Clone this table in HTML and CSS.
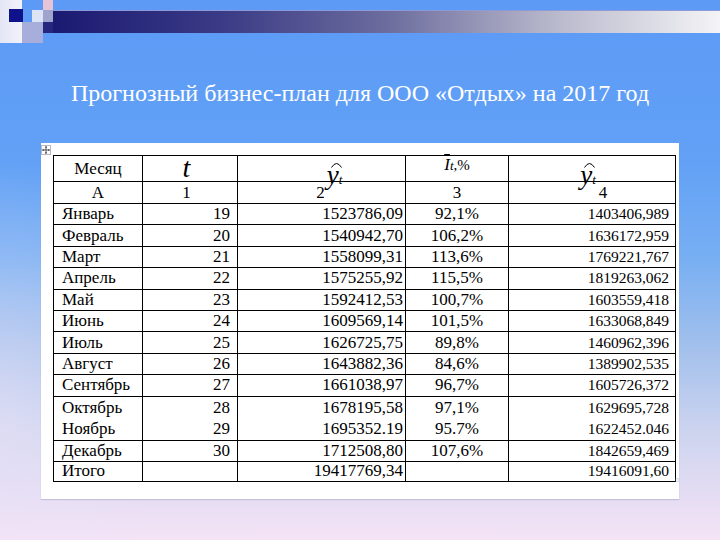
FILE: index.html
```html
<!DOCTYPE html>
<html lang="ru">
<head>
<meta charset="utf-8">
<title>Прогнозный бизнес-план</title>
<link rel="stylesheet" href="styles.css">
</head>
<body>
<div class="slide">
  <div class="decor">
    <span class="sq sq-a"></span>
    <span class="sq sq-b"></span>
    <span class="sq sq-c"></span>
    <span class="sq sq-d"></span>
    <span class="sq sq-e"></span>
    <span class="sq sq-f"></span>
    <span class="sq sq-g"></span>
    <span class="bar"></span>
  </div>
  <h1 class="title">Прогнозный бизнес-план для ООО «Отдых» на 2017 год</h1>
  <div class="panel">
    <svg class="handle" viewBox="0 0 10 10" width="10" height="10">
      <rect x="0.5" y="0.5" width="9" height="9" fill="#fff" stroke="#b8b8c8"/>
      <path d="M5 1.5V8.5M1.5 5H8.5" stroke="#333" stroke-width="0.8"/>
      <path d="M5 1 L3.8 2.6 H6.2Z M5 9 L3.8 7.4 H6.2Z M1 5 L2.6 3.8 V6.2Z M9 5 L7.4 3.8 V6.2Z" fill="#333"/>
    </svg>
    <table class="grid">
      <colgroup>
        <col class="c1"><col class="c2"><col class="c3"><col class="c4"><col class="c5">
      </colgroup>
      <tr class="r-head">
        <td class="ctr">Месяц</td>
        <td class="ctr"><i class="tvar">t</i></td>
        <td class="ctr top"><span class="yhat shift3"><i class="yv">y</i><svg class="hat" viewBox="0 0 12 7"><path d="M1 6.5 Q6 -1.5 11 6.5" fill="none" stroke="#000" stroke-width="1"/></svg><i class="sub">t</i></span></td>
        <td class="ctr top"><span class="ibar"><i class="iv">I</i><i class="sub">t</i>,%</span></td>
        <td class="ctr top"><span class="yhat shift5"><i class="yv">y</i><svg class="hat" viewBox="0 0 12 7"><path d="M1 6.5 Q6 -1.5 11 6.5" fill="none" stroke="#000" stroke-width="1"/></svg><i class="sub">t</i></span></td>
      </tr>
      <tr class="r-num">
        <td class="ctr">А</td>
        <td class="ctr">1</td>
        <td class="ctr">2</td>
        <td class="ctr">3</td>
        <td class="ctr four">4</td>
      </tr>
      <tr><td>Январь</td><td class="rt">19</td><td class="rt">1523786,09</td><td class="ctr">92,1%</td><td class="rt n5">1403406,989</td></tr>
      <tr><td>Февраль</td><td class="rt">20</td><td class="rt">1540942,70</td><td class="ctr">106,2%</td><td class="rt n5">1636172,959</td></tr>
      <tr><td>Март</td><td class="rt">21</td><td class="rt">1558099,31</td><td class="ctr">113,6%</td><td class="rt n5">1769221,767</td></tr>
      <tr><td>Апрель</td><td class="rt">22</td><td class="rt">1575255,92</td><td class="ctr">115,5%</td><td class="rt n5">1819263,062</td></tr>
      <tr><td>Май</td><td class="rt">23</td><td class="rt">1592412,53</td><td class="ctr">100,7%</td><td class="rt n5">1603559,418</td></tr>
      <tr><td>Июнь</td><td class="rt">24</td><td class="rt">1609569,14</td><td class="ctr">101,5%</td><td class="rt n5">1633068,849</td></tr>
      <tr><td>Июль</td><td class="rt">25</td><td class="rt">1626725,75</td><td class="ctr">89,8%</td><td class="rt n5">1460962,396</td></tr>
      <tr><td>Август</td><td class="rt">26</td><td class="rt">1643882,36</td><td class="ctr">84,6%</td><td class="rt n5">1389902,535</td></tr>
      <tr><td>Сентябрь</td><td class="rt">27</td><td class="rt">1661038,97</td><td class="ctr">96,7%</td><td class="rt n5">1605726,372</td></tr>
      <tr class="r-double"><td>Октябрь<br>Ноябрь</td><td class="rt">28<br>29</td><td class="rt">1678195,58<br>1695352.19</td><td class="ctr">97,1%<br>95.7%</td><td class="rt n5">1629695,728<br>1622452.046</td></tr>
      <tr><td>Декабрь</td><td class="rt">30</td><td class="rt">1712508,80</td><td class="ctr">107,6%</td><td class="rt n5">1842659,469</td></tr>
      <tr class="r-total"><td>Итого</td><td></td><td class="rt">19417769,34</td><td></td><td class="rt n5">19416091,60</td></tr>
    </table>
    <span class="cellmark">¤</span>
  </div>
</div>
</body>
</html>
```

FILE: styles.css
```css
html, body {
  margin: 0;
  padding: 0;
}
body {
  width: 720px;
  height: 540px;
  overflow: hidden;
  font-family: "Liberation Serif", Tinos, "DejaVu Serif", serif;
}
.slide {
  width: 720px;
  height: 540px;
  display: flex;
  flex-direction: column;
  background:
    radial-gradient(ellipse 160px 260px at 0% 78%, rgba(236, 228, 248, 0.55), rgba(236, 228, 248, 0) 100%),
    linear-gradient(to bottom, #5c9af6 0%, #62a1f6 30%, #78aff3 48%, #a2c0ec 64%, #cdd4ef 80%, #f5e3f6 100%);
}
.decor {
  position: relative;
  height: 43px;
  flex: none;
}
.sq {
  position: absolute;
  display: block;
}
.sq-a { left: 0; top: 0; width: 22px; height: 43px; background: linear-gradient(to right, #e4e6f6, #f2f2fb); }
.sq-b { left: 9px; top: 9px; width: 14px; height: 13px; background: #10128c; }
.sq-c { left: 32px; top: 10px; width: 11px; height: 12px; background: #dce4f5; }
.sq-d { left: 43px; top: 0; width: 10px; height: 10px; background: #e6c4d6; }
.sq-e { left: 43px; top: 10px; width: 10px; height: 12px; background: #9ea4cc; }
.sq-f { left: 22px; top: 22px; width: 21px; height: 21px; background: #a7aedc; }
.sq-g { left: 43px; top: 22px; width: 10px; height: 11px; background: #26267e; }
.bar {
  position: absolute;
  left: 53px;
  top: 10px;
  width: 667px;
  height: 23px;
  background: linear-gradient(to right, #1b1a72 0%, #3a3a86 25%, #6c6c9e 50%, #b8b8cc 75%, #f4f4f6 100%);
  border-top: 1px solid #8e9ad8;
  box-sizing: border-box;
}
.title {
  margin: 36px 0 0 0;
  height: 28px;
  line-height: 28px;
  font-family: "Liberation Serif", Tinos, "DejaVu Serif", serif;
  font-size: 24px;
  font-weight: normal;
  color: #ffffff;
  text-align: center;
  white-space: nowrap;
}
.panel {
  position: relative;
  margin: 36px 0 0 41px;
  width: 638px;
  box-sizing: border-box;
  padding: 12px 4px 17px 12px;
  background: #ffffff;
  box-shadow: 0 1px 1px rgba(120, 120, 160, 0.3);
}
.handle {
  position: absolute;
  left: 0;
  top: 2px;
}
.cellmark {
  position: absolute;
  right: 0;
  top: 334px;
  font-size: 8px;
  color: #aaa;
  line-height: 8px;
}
.grid {
  border-collapse: collapse;
  table-layout: fixed;
  width: 622px;
  font-family: "Liberation Serif", Tinos, "DejaVu Serif", serif;
  font-size: 17px;
  color: #000;
}
.c1 { width: 89px; }
.c2 { width: 95px; }
.c3 { width: 168px; }
.c4 { width: 103px; }
.c5 { width: 167px; }
.grid td {
  border: 1px solid #000;
  padding: 0 4px 0 8px;
  height: 20.4px;
  line-height: 18px;
  white-space: nowrap;
  overflow: hidden;
  vertical-align: middle;
}
.grid .rt { text-align: right; padding-right: 6px; }
.grid tr td:nth-child(3) { padding-right: 2px; }
.grid tr td:nth-child(2) { padding-right: 7px; }
.grid .ctr { text-align: center; padding-left: 0; padding-right: 0; }
.grid .n5 { font-size: 15.5px; padding-right: 6px; }
.grid .r-head td { height: 25px; overflow: visible; }
.grid .r-num td { height: 21px; }
.grid .r-double td { height: 42px; line-height: 21.5px; }
.grid .r-total td { height: 19px; }
.grid .top { vertical-align: top; }
.grid .four { padding-left: 22px; }
.tvar {
  display: inline-block;
  font-size: 28px;
  line-height: 20px;
  height: 20px;
  position: relative;
  top: 1px;
}
.yhat {
  position: relative;
  display: inline-block;
  line-height: 20px;
  top: 9px;
}
.shift3 { left: 14px; }
.shift5 { left: -4px; }
.yv {
  font-size: 27px;
  line-height: 20px;
}
.hat {
  position: absolute;
  left: 3px;
  top: -4px;
  width: 13px;
  height: 7px;
}
.sub {
  font-size: 13px;
  line-height: 12px;
}
.ibar {
  font-size: 15px;
  line-height: 18px;
}
.iv {
  font-size: 17px;
  text-decoration: overline;
}
```
